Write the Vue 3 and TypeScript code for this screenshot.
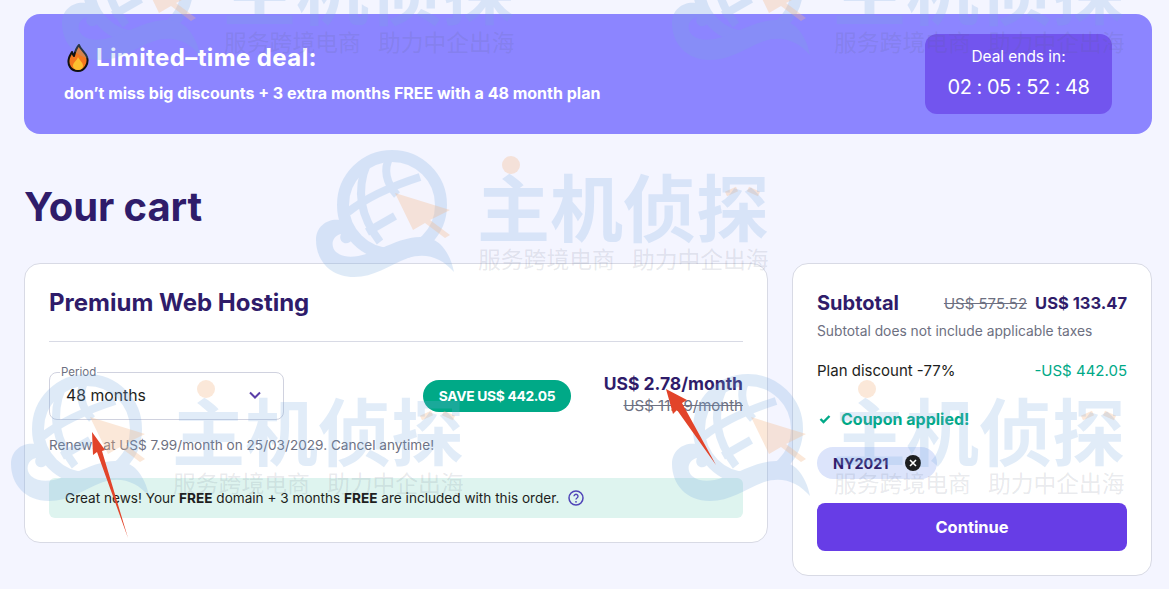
<script setup lang="ts">
interface Mark { id: number; left: number; top: number }
const marks: Mark[] = [
  { id: 1, left: 62, top: -67 },
  { id: 2, left: 672, top: -67 },
  { id: 3, left: 316, top: 150 },
  { id: 4, left: 11, top: 374 },
  { id: 5, left: 672, top: 374 },
]
const markPos = (m: Mark) => ({ left: `${m.left}px`, top: `${m.top}px` })
</script>

<template>
  <div class="page">
    <section class="banner">
      <div class="banner-copy">
        <h2 class="deal-title">
          <svg class="flame" viewBox="0 0 24 28" width="24" height="28" aria-hidden="true">
            <path d="M13 1c1 4 6 7 8 12 2 6-2 14-9 14S1 21 3 14c1-3 2-4 3-6 1 2 1 3 2 4 1-4 2-8 5-11z" fill="#f4771f" stroke="#111" stroke-width="2" stroke-linejoin="round"/>
            <path d="M12 13c1 3 5 5 5 9 0 2-2 4-5 4s-5-2-5-4c0-4 4-5 5-9z" fill="#fdc02f"/>
          </svg>
          <span>Limited–time deal:</span>
        </h2>
        <p class="deal-sub">don’t miss big discounts + 3 extra months FREE with a 48 month plan</p>
      </div>
      <div class="timer">
        <div class="timer-label">Deal ends in:</div>
        <div class="timer-value">02 : 05 : 52 : 48</div>
      </div>
    </section>

    <h1 class="cart-title">Your cart</h1>

    <div class="cart-grid">
      <section class="card plan">
        <h3 class="plan-name">Premium Web Hosting</h3>
        <hr class="rule" />
        <div class="plan-row">
          <fieldset class="select">
            <legend>Period</legend>
            <span>48 months</span>
            <svg viewBox="0 0 12 8" width="12" height="8" aria-hidden="true"><path d="M1 1.5l5 5 5-5" fill="none" stroke="#5b3fa8" stroke-width="2"/></svg>
          </fieldset>
          <div class="save">SAVE US$ 442.05</div>
          <div class="price">
            <div class="price-now">US$ 2.78/month</div>
            <div class="price-old">US$ 11.59/month</div>
          </div>
        </div>
        <p class="renew">Renews at US$ 7.99/month on 25/03/2029. Cancel anytime!</p>
        <div class="note">
          <span>Great news! Your <b>FREE</b> domain + 3 months <b>FREE</b> are included with this order.</span>
          <svg viewBox="0 0 16 16" width="16" height="16" aria-hidden="true">
            <circle cx="8" cy="8" r="7" fill="none" stroke="#4f44b8" stroke-width="1.5"/>
            <path d="M6 6.2a2 2 0 1 1 3 1.8c-.7.4-1 .8-1 1.6" fill="none" stroke="#4f44b8" stroke-width="1.4"/>
            <circle cx="8" cy="11.8" r=".9" fill="#4f44b8"/>
          </svg>
        </div>
      </section>

      <aside class="card summary">
        <div class="sub-row">
          <span class="sub-label">Subtotal</span>
          <span class="sub-prices"><s>US$ 575.52</s><b>US$ 133.47</b></span>
        </div>
        <p class="sub-note">Subtotal does not include applicable taxes</p>
        <div class="discount">
          <span>Plan discount -77%</span>
          <span class="green">-US$ 442.05</span>
        </div>
        <div class="coupon">
          <svg viewBox="0 0 12 10" width="12" height="10" aria-hidden="true"><path d="M1.5 5l3 3 6-6" fill="none" stroke="#00a987" stroke-width="2.4"/></svg>
          <span>Coupon applied!</span>
        </div>
        <div class="chip">
          <span>NY2021</span>
          <svg viewBox="0 0 16 16" width="16" height="16" aria-hidden="true">
            <circle cx="8" cy="8" r="8" fill="#1d1e20"/>
            <path d="M5 5l6 6M11 5l-6 6" stroke="#fff" stroke-width="1.6"/>
          </svg>
        </div>
        <button class="continue" type="button">Continue</button>
      </aside>
    </div>

    <!-- watermarks stamped over the screenshot -->
    <div v-for="m in marks" :key="m.id" class="mark" :style="markPos(m)" aria-hidden="true">
      <svg class="mark-logo" viewBox="0 0 452 130" width="452" height="130">
        <g class="mark-blue">
          <circle cx="76" cy="55" r="49" fill="none" stroke="#78aae1" stroke-width="12"/>
          <g fill="none" stroke="#78aae1" stroke-width="8">
            <path d="M51 14C40 40 44 66 64 92"/>
            <path d="M32 62C50 48 76 36 104 27"/>
            <path d="M51 82l28-16"/>
            <path d="M74 7c-7 12-4 26 7 38"/>
          </g>
          <path d="M0 90C0 76 12 68 24 70c14 2 18 16 10 22-6 4-12-2-9-8-9 2-11 12-5 18 12 10 32 2 46-4 18-8 42-18 58-4 8 8 12 18 14 28-12-14-28-20-46-14-20 8-34 19-54 19-24 0-38-17-38-37z" fill="#78aae1"/>
        </g>
        <g class="mark-orange">
          <path d="M79 43l55 17-20 10 20 15-5 3-20-15-12 7z" fill="#f5b98a"/>
          <circle cx="195" cy="15" r="9" fill="#f5b98a"/>
          <path d="M410 44l11-5M432 39l11 5" fill="none" stroke="#f5b98a" stroke-width="5"/>
        </g>
      </svg>
      <div class="mark-text">
        <div class="mark-big">主机侦探</div>
        <div class="mark-small">服务跨境电商 助力中企出海</div>
      </div>
    </div>

    <!-- red annotation arrows -->
    <svg class="arrows" viewBox="0 0 1169 589" width="1169" height="589" aria-hidden="true">
      <path d="M92 432l13 18-3 1 26 87-31-86-4 3z" fill="#e2442a"/>
      <path d="M666 389l21 11-5 3 34 62-39-55-4 4z" fill="#e2442a"/>
    </svg>
  </div>
</template>

<style>
html, body { margin: 0; background: #f4f5ff; }
</style>

<style scoped>
.page {
  position: relative;
  width: 1169px;
  height: 589px;
  overflow: hidden;
  box-sizing: border-box;
  padding: 14px 17px 0 24px;
  background: #f4f5ff;
  font-family: Inter, "Noto Sans", sans-serif;
  color: #2f1c6a;
}
.banner {
  display: flex;
  justify-content: space-between;
  align-items: center;
  box-sizing: border-box;
  height: 120px;
  padding: 0 40px;
  border-radius: 16px;
  background: #8c85ff;
  color: #fff;
}
.banner-copy { margin-top: -2px; }
.deal-title {
  display: flex;
  align-items: center;
  gap: 6px;
  margin: 0;
  padding-left: 2px;
  font-size: 24px;
  line-height: 30px;
  font-weight: 700;
  letter-spacing: .4px;
}
.flame { flex: none; }
.deal-sub {
  margin: 10px 0 0;
  font-size: 16px;
  line-height: 20px;
  font-weight: 700;
}
.timer {
  box-sizing: border-box;
  width: 187px;
  height: 80px;
  padding-top: 13px;
  border-radius: 12px;
  background: #7255ee;
  text-align: center;
}
.timer-label { font-size: 15.4px; line-height: 20px; }
.timer-value { margin-top: 7px; font-size: 20px; line-height: 26px; letter-spacing: -.5px; }
.cart-title {
  margin: 49px 0 0;
  font-size: 40px;
  line-height: 48px;
  font-weight: 700;
  letter-spacing: -.1px;
  color: #2f1c6a;
}
.cart-grid {
  display: grid;
  grid-template-columns: 744px 360px;
  gap: 24px;
  align-items: start;
  margin-top: 32px;
}
.card {
  box-sizing: border-box;
  border: 1px solid #d8dae5;
  border-radius: 16px;
  background: #fff;
  padding: 0 24px;
}
.plan { height: 280px; }
.plan-name {
  margin: 24px 0 0;
  font-size: 24px;
  line-height: 30px;
  font-weight: 700;
}
.rule { margin: 23px 0 0; border: 0; border-top: 1px solid #d8dae5; }
.plan-row { display: flex; align-items: flex-start; margin-top: 30px; }
.select {
  display: flex;
  align-items: center;
  justify-content: space-between;
  box-sizing: border-box;
  width: 235px;
  height: 54px;
  margin: -6px 0 0;
  padding: 0 22px 7px 16px;
  border: 1px solid #d0d2df;
  border-radius: 8px;
  font-size: 15.8px;
  color: #1d1e20;
  min-width: 0;
}
.select legend {
  margin-left: -6px;
  padding: 0 1px;
  font-size: 11.5px;
  line-height: 12px;
  color: #6d7081;
}
.save {
  margin: 8px 0 0 139px;
  width: 148px;
  height: 32px;
  border-radius: 16px;
  background: #00a987;
  color: #fff;
  font-size: 13.8px;
  font-weight: 700;
  line-height: 32px;
  text-align: center;
  letter-spacing: -.3px;
}
.price { margin-left: auto; text-align: right; }
.price-now { font-size: 17.5px; line-height: 24px; font-weight: 700; }
.price-old { font-size: 15px; line-height: 20px; color: #6d7081; text-decoration: line-through; }
.renew { margin: 16px 0 0; font-size: 13.6px; line-height: 18px; color: #6d7081; }
.note {
  display: flex;
  align-items: center;
  gap: 9px;
  box-sizing: border-box;
  height: 40px;
  margin-top: 24px;
  padding: 0 16px;
  border-radius: 6px;
  background: #def4ef;
  font-size: 13.6px;
  color: #1d1e20;
}
.summary { height: 313px; padding-top: 27px; }
.sub-row { display: flex; justify-content: space-between; align-items: center; height: 24px; }
.sub-label { font-size: 20px; font-weight: 700; }
.sub-prices { display: flex; gap: 8px; align-items: center; font-size: 16.5px; }
.sub-prices s { color: #6d7081; font-size: 15px; }
.sub-prices b { font-weight: 700; }
.sub-note { margin: 8px 0 0; font-size: 13.8px; line-height: 16px; color: #6d7081; }
.discount {
  display: flex;
  justify-content: space-between;
  margin-top: 23px;
  font-size: 15px;
  line-height: 18px;
  color: #1d1e20;
}
.green { color: #00a987; }
.coupon {
  display: flex;
  align-items: center;
  gap: 10px;
  margin-top: 29px;
  padding-left: 2px;
  font-size: 16px;
  line-height: 20px;
  font-weight: 700;
  color: #00a987;
}
.chip {
  display: inline-flex;
  align-items: center;
  gap: 16px;
  box-sizing: border-box;
  height: 32px;
  margin-top: 18px;
  padding: 0 16px;
  border-radius: 16px;
  background: #dce4fb;
  font-size: 14.4px;
  font-weight: 700;
  color: #2f1c6a;
}
.continue {
  display: block;
  width: 100%;
  height: 48px;
  margin-top: 24px;
  border: 0;
  border-radius: 8px;
  background: #673de6;
  color: #fff;
  font: 700 16.4px Inter, "Noto Sans", sans-serif;
}
.mark {
  position: absolute;
  width: 452px;
  height: 122px;
  pointer-events: none;
}
.mark-logo { position: absolute; left: 0; top: 0; overflow: visible; }
.mark-blue { opacity: .24; }
.mark-orange { opacity: .32; }
.mark-text {
  position: absolute;
  left: 161px;
  top: 0;
  font-family: "Noto Sans CJK SC", sans-serif;
  white-space: nowrap;
}
.mark-big {
  font-size: 73px;
  line-height: 74px;
  margin-top: 17px;
  font-weight: 700;
  color: rgba(120, 170, 225, .22);
}
.mark-small {
  margin: 5px 0 0 1px;
  font-size: 22.8px;
  line-height: 26px;
  word-spacing: 12px;
  color: rgba(90, 100, 125, .14);
}
.arrows { position: absolute; left: 0; top: 0; pointer-events: none; }
</style>
